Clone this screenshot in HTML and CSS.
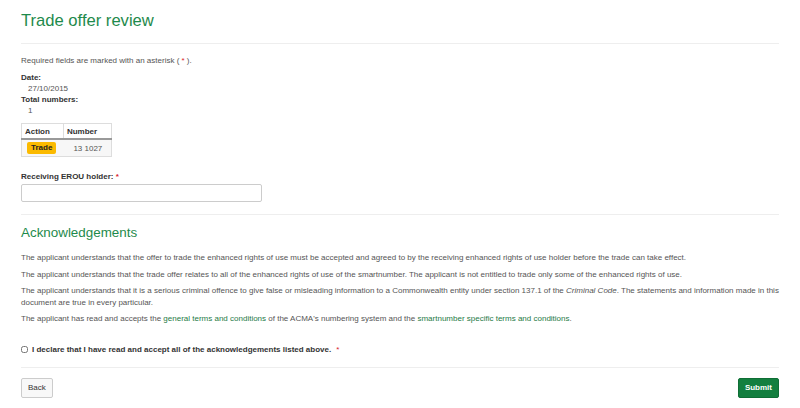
FILE: index.html
```html
<!DOCTYPE html>
<html lang="en">
<head>
  <meta charset="UTF-8">
  <title>Trade offer review</title>
  <link rel="stylesheet" href="styles.css">
</head>
<body>

<div class="page">
  <h1 class="page-title">Trade offer review</h1>
  <hr>

  <p class="required-note">Required fields are marked with an asterisk ( <span class="req">*</span> ).</p>

  <dl class="details">
    <dt>Date:</dt>
    <dd>27/10/2015</dd>
    <dt>Total numbers:</dt>
    <dd>1</dd>
  </dl>

  <table class="numbers">
    <thead>
      <tr>
        <th>Action</th>
        <th>Number</th>
      </tr>
    </thead>
    <tbody>
      <tr>
        <td><span class="badge">Trade</span></td>
        <td class="num">13 1027</td>
      </tr>
    </tbody>
  </table>

  <div class="field">
    <label for="holder">Receiving EROU holder: <span class="req">*</span></label>
    <input type="text" id="holder">
  </div>

  <hr>

  <h2 class="section-title">Acknowledgements</h2>

  <div class="ack">
    <p>The applicant understands that the offer to trade the enhanced rights of use must be accepted and agreed to by the receiving enhanced rights of use holder before the trade can take effect.</p>
    <p>The applicant understands that the trade offer relates to all of the enhanced rights of use of the smartnumber. The applicant is not entitled to trade only some of the enhanced rights of use.</p>
    <p>The applicant understands that it is a serious criminal offence to give false or misleading information to a Commonwealth entity under section 137.1 of the <em>Criminal Code</em>. The statements and information made in this document are true in every particular.</p>
    <p>The applicant has read and accepts the <a href="#">general terms and conditions</a> of the ACMA's numbering system and the <a href="#">smartnumber specific terms and conditions</a>.</p>
  </div>

  <div class="declare">
    <input type="checkbox" id="declare">
    <label for="declare">I declare that I have read and accept all of the acknowledgements listed above.</label>
    <span class="req">*</span>
  </div>

  <hr>

  <div class="actions">
    <button class="btn">Back</button>
    <button class="btn btn-primary">Submit</button>
  </div>
</div>

</body>
</html>
```

FILE: styles.css
```css
body {
  font-family: "Liberation Sans", Arial, sans-serif;
  font-size: 8px;
  line-height: 11px;
  color: #555;
  margin: 0;
  padding: 0;
  background-color: #fff;
}

.page {
  padding: 0 21px;
}

hr {
  border: none;
  border-top: 1px solid #eee;
  margin: 0;
}

.page-title {
  font-size: 16.6px;
  font-weight: normal;
  line-height: 20px;
  color: #1e8a4c;
  margin: 11px 0 12px;
}

.section-title {
  font-size: 13.4px;
  font-weight: normal;
  line-height: 17px;
  color: #1e8a4c;
  margin: 9px 0 11px;
}

.req {
  color: #d9232d;
}

.required-note {
  margin: 11px 0 6px;
}

.details {
  margin: 0 0 7px;
}

.details dt {
  font-weight: bold;
  color: #333;
}

.details dd {
  margin: 0 0 0 7px;
}

.numbers {
  border-collapse: collapse;
  border: 1px solid #ddd;
  margin-bottom: 14px;
}

.numbers th {
  text-align: left;
  color: #333;
  font-weight: bold;
  padding: 2px 3px 1px 3px;
  border-left: 1px solid #ddd;
  border-bottom: 2px solid #999;
}

.numbers th:first-child {
  padding-right: 13px;
}

.numbers th:last-child {
  padding-right: 14px;
}

.numbers td {
  background-color: #f7f7f7;
  padding: 2px 5px 2px 5px;
}

.numbers td.num {
  padding-left: 10px;
}

.badge {
  display: inline-block;
  background-color: #fbba00;
  color: #222;
  font-weight: bold;
  padding: 0 4px;
  border-radius: 2px;
  line-height: 12px;
}

.field {
  margin-bottom: 12px;
}

.field label {
  display: block;
  font-weight: bold;
  color: #333;
  margin-bottom: 2px;
}

.field input {
  display: block;
  width: 241px;
  height: 18px;
  box-sizing: border-box;
  border: 1px solid #ccc;
  border-radius: 2px;
  padding: 0 4px;
  font-size: 8px;
}

.ack p {
  margin: 0 0 5px;
  line-height: 11.5px;
}

.ack a {
  color: #1e7a46;
  text-decoration: none;
}

.declare {
  display: flex;
  align-items: center;
  margin: 19px 0 12px;
  font-weight: bold;
  color: #333;
}

.declare input {
  width: 7px;
  height: 7px;
  margin: 0 4px 0 0;
}

.declare .req {
  margin-left: 5px;
  font-weight: normal;
}

.actions {
  display: flex;
  justify-content: space-between;
  margin-top: 10px;
}

.btn {
  font-family: "Liberation Sans", Arial, sans-serif;
  font-size: 8px;
  height: 20px;
  padding: 0 6px;
  color: #333;
  background-color: #f8f8f8;
  border: 1px solid #ccc;
  border-radius: 2px;
}

.btn-primary {
  color: #fff;
  background-color: #137f3f;
  border-color: #0f6e35;
  font-weight: bold;
}
```
